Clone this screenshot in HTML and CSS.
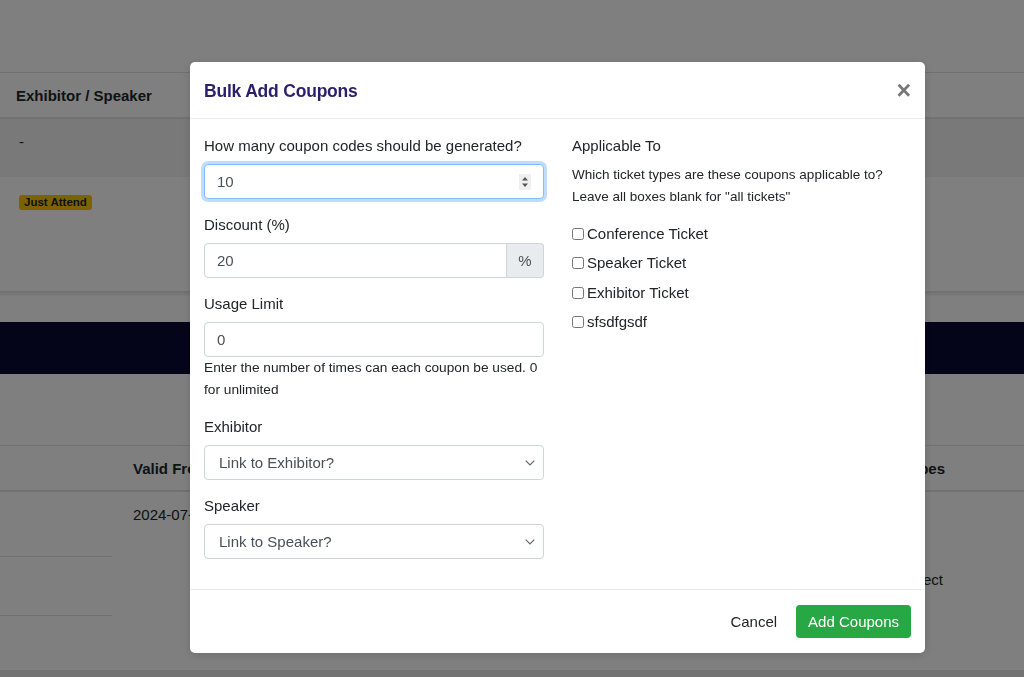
FILE: index.html
```html
<!DOCTYPE html>
<html lang="en">
<head>
  <meta charset="UTF-8" />
  <meta name="viewport" content="width=device-width, initial-scale=1.0"/>
  <title>Coupons</title>
  <link rel="stylesheet" href="styles.css">
</head>
<body>
  <div class="page">
    <div class="top-space"></div>

    <div class="table-top">
      <div class="tt-head">Exhibitor / Speaker</div>
      <div class="tt-row striped">-</div>
      <div class="tt-row tall"><span class="badge-warning">Just Attend</span></div>
    </div>

    <div class="gap-band"></div>
    <div class="navbar-dark"></div>
    <div class="spacer"></div>

    <div class="table-bottom">
      <div class="tb-head">
        <div class="tb-cell first"></div>
        <div class="tb-cell">Valid From</div>
        <div class="tb-cell right">Ticket Types</div>
      </div>
      <div class="tb-row one">
        <div class="tb-cell first lined"></div>
        <div class="tb-cell">2024-07-01</div>
        <div class="tb-cell right"></div>
      </div>
      <div class="tb-row two">
        <div class="tb-cell first lined"></div>
        <div class="tb-cell"></div>
        <div class="tb-cell right low">Select</div>
      </div>
      <div class="tb-row three">
        <div class="tb-cell first"></div>
        <div class="tb-cell"></div>
        <div class="tb-cell right"></div>
      </div>
      <div class="tb-foot"></div>
    </div>
  </div>

  <div class="backdrop"></div>

  <div class="modal-wrap">
    <div class="modal">
      <div class="modal-header">
        <h5 class="modal-title">Bulk Add Coupons</h5>
        <button type="button" class="close-btn">&times;</button>
      </div>

      <div class="modal-body">
        <div class="col">
          <div class="form-group">
            <label for="count">How many coupon codes should be generated?</label>
            <div class="number-wrap">
              <input type="text" id="count" class="form-control is-focus" value="10" />
              <svg class="spinner" width="12" height="16" viewBox="0 0 12 16">
                <rect x="0" y="0" width="12" height="16" rx="1" fill="#efefef"/>
                <path d="M3 6.5 L6 3 L9 6.5 Z" fill="#555"/>
                <path d="M3 9.5 L6 13 L9 9.5 Z" fill="#555"/>
              </svg>
            </div>
          </div>

          <div class="form-group">
            <label for="discount">Discount (%)</label>
            <div class="input-group">
              <input type="text" id="discount" class="form-control" value="20" />
              <span class="addon">%</span>
            </div>
          </div>

          <div class="form-group">
            <label for="limit">Usage Limit</label>
            <input type="text" id="limit" class="form-control" value="0" />
            <small class="help">Enter the number of times can each coupon be used. 0 for unlimited</small>
          </div>

          <div class="form-group">
            <label for="exhibitor">Exhibitor</label>
            <div class="select-wrap">
              <select id="exhibitor" class="form-select">
                <option>Link to Exhibitor?</option>
              </select>
              <svg class="chevron" width="10" height="6" viewBox="0 0 10 6">
                <path d="M0.7 0.7 L5 5 L9.3 0.7" fill="none" stroke="#666" stroke-width="1.2"/>
              </svg>
            </div>
          </div>

          <div class="form-group">
            <label for="speaker">Speaker</label>
            <div class="select-wrap">
              <select id="speaker" class="form-select">
                <option>Link to Speaker?</option>
              </select>
              <svg class="chevron" width="10" height="6" viewBox="0 0 10 6">
                <path d="M0.7 0.7 L5 5 L9.3 0.7" fill="none" stroke="#666" stroke-width="1.2"/>
              </svg>
            </div>
          </div>
        </div>

        <div class="col">
          <label>Applicable To</label>
          <p class="help-block">Which ticket types are these coupons applicable to? Leave all boxes blank for "all tickets"</p>
          <label class="check"><input type="checkbox" /> Conference Ticket</label>
          <label class="check"><input type="checkbox" /> Speaker Ticket</label>
          <label class="check"><input type="checkbox" /> Exhibitor Ticket</label>
          <label class="check"><input type="checkbox" /> sfsdfgsdf</label>
        </div>
      </div>

      <div class="modal-footer">
        <button type="button" class="btn btn-link">Cancel</button>
        <button type="button" class="btn btn-success">Add Coupons</button>
      </div>
    </div>
  </div>
</body>
</html>
```

FILE: styles.css
```css
body {
  margin: 0;
  padding: 0;
  font-family: 'Liberation Sans', Arial, sans-serif;
  font-size: 15px;
  color: #212529;
  background: #fff;
  overflow: hidden;
}

/* page behind the dialog */
.page {
  height: 677px;
}

.top-space {
  height: 72px;
}

.table-top {
  border-top: 1px solid #dee2e6;
}

.tt-head {
  height: 44px;
  line-height: 46px;
  padding-left: 16px;
  font-weight: bold;
  border-bottom: 2px solid #dee2e6;
}

.tt-row {
  padding-left: 19px;
}

.tt-row.striped {
  height: 58px;
  line-height: 46px;
  background: #f2f2f2;
}

.tt-row.tall {
  height: 115px;
  padding-top: 15px;
  box-sizing: border-box;
  border-bottom: 1px solid #dee2e6;
}

.badge-warning {
  display: inline-block;
  background: #ffc107;
  color: #212529;
  font-size: 11.5px;
  font-weight: bold;
  line-height: 15px;
  padding: 0 5px;
  border-radius: 3px;
}

.gap-band {
  height: 30px;
  background: linear-gradient(#e4e4e4, #fff 5px);
}

.navbar-dark {
  height: 52px;
  background: #0a0a35;
}

.spacer {
  height: 71px;
  border-bottom: 1px solid #dee2e6;
}

.tb-head,
.tb-row {
  display: grid;
  grid-template-columns: 112px 1fr 300px;
}

.tb-head {
  height: 44px;
  line-height: 46px;
  font-weight: bold;
  border-bottom: 2px solid #dee2e6;
}

.tb-cell {
  padding-left: 21px;
}

.tb-cell.first {
  padding-left: 0;
}

.tb-cell.right {
  text-align: right;
  padding-right: 79px;
}

.tb-row.one {
  height: 65px;
  line-height: 46px;
}

.tb-row.two {
  height: 59px;
}

.tb-row.three {
  height: 54px;
}

.tb-cell.low {
  padding-top: 14px;
  padding-right: 81px;
}

.tb-cell.lined {
  border-bottom: 1px solid #dee2e6;
}

.tb-foot {
  height: 12px;
  background: #e6e6e6;
}

/* dialog */
.backdrop {
  position: fixed;
  inset: 0;
  background: rgba(0, 0, 0, 0.5);
}

.modal-wrap {
  position: fixed;
  top: 62px;
  left: 190px;
}

.modal {
  width: 735px;
  background: #fff;
  border-radius: 5px;
  box-shadow: 0 2px 10px rgba(0, 0, 0, 0.15);
}

.modal-header {
  display: flex;
  align-items: center;
  justify-content: space-between;
  height: 56px;
  padding: 0 14px;
  border-bottom: 1px solid #e9ecef;
}

.modal-title {
  margin: 2px 0 0;
  font-size: 17.5px;
  font-weight: 600;
  color: #2b1f6b;
  letter-spacing: -0.2px;
}

.close-btn {
  background: none;
  border: none;
  padding: 0;
  margin-right: 0;
  font-family: 'Liberation Sans', Arial, sans-serif;
  font-size: 25px;
  font-weight: bold;
  line-height: 1;
  color: #777;
}

.modal-body {
  display: grid;
  grid-template-columns: 340px 1fr;
  column-gap: 28px;
  padding: 16px 14px 15px;
}

label {
  display: block;
  line-height: 22px;
  margin-bottom: 7px;
}

.form-group {
  margin-bottom: 15px;
}

.form-control,
.form-select {
  display: block;
  width: 100%;
  box-sizing: border-box;
  height: 35px;
  padding: 6px 12px;
  font-family: inherit;
  font-size: 15px;
  line-height: 21px;
  color: #495057;
  background: #fff;
  border: 1px solid #ced4da;
  border-radius: 4px;
  outline: none;
}

.form-control.is-focus {
  border-color: #80bdff;
  box-shadow: 0 0 0 3px rgba(0, 123, 255, 0.25);
}

.number-wrap,
.select-wrap {
  position: relative;
}

.spinner {
  position: absolute;
  right: 13px;
  top: 10px;
}

.input-group {
  display: flex;
}

.input-group .form-control {
  flex: 1;
  border-radius: 4px 0 0 4px;
}

.addon {
  width: 37px;
  box-sizing: border-box;
  height: 35px;
  line-height: 33px;
  text-align: center;
  color: #495057;
  background: #e9ecef;
  border: 1px solid #ced4da;
  border-left: none;
  border-radius: 0 4px 4px 0;
}

.help {
  display: block;
  font-size: 13.7px;
  line-height: 22px;
  color: #212529;
}

.form-select {
  appearance: none;
  -webkit-appearance: none;
  padding-left: 14px;
}

.chevron {
  position: absolute;
  right: 9px;
  top: 15px;
}

.help-block {
  margin: 1px 0 15px;
  font-size: 13.5px;
  line-height: 22px;
}

.check {
  display: flex;
  align-items: center;
  margin-bottom: 7.4px;
}

.check input {
  width: 12px;
  height: 12px;
  margin: 0 3px 0 0;
}

.modal-footer {
  display: flex;
  justify-content: flex-end;
  align-items: center;
  gap: 7px;
  padding: 15px 14px;
  border-top: 1px solid #e9ecef;
}

.btn {
  font-family: inherit;
  font-size: 15px;
  line-height: 21px;
  padding: 5px 11px;
  border: 1px solid transparent;
  border-radius: 4px;
}

.btn-link {
  background: none;
  color: #212529;
}

.btn-success {
  background: #28a745;
  color: #fff;
}
```
